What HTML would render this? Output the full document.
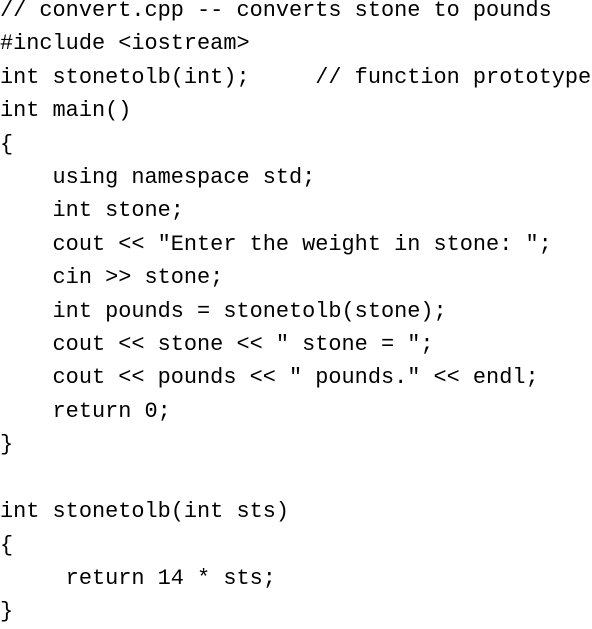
<!DOCTYPE html>
<html><head><style>
html,body{margin:0;padding:0;background:#fff;width:592px;height:628px;overflow:hidden}
pre{margin:0;position:absolute;left:0;top:-6px;font-family:"Liberation Mono",monospace;font-size:21.9px;line-height:33.4px;color:#000}
</style></head><body><pre>// convert.cpp -- converts stone to pounds
#include &lt;iostream&gt;
int stonetolb(int);     // function prototype
int main()
{
    using namespace std;
    int stone;
    cout &lt;&lt; "Enter the weight in stone: ";
    cin &gt;&gt; stone;
    int pounds = stonetolb(stone);
    cout &lt;&lt; stone &lt;&lt; " stone = ";
    cout &lt;&lt; pounds &lt;&lt; " pounds." &lt;&lt; endl;
    return 0;
}

int stonetolb(int sts)
{
     return 14 * sts;
}</pre></body></html>
